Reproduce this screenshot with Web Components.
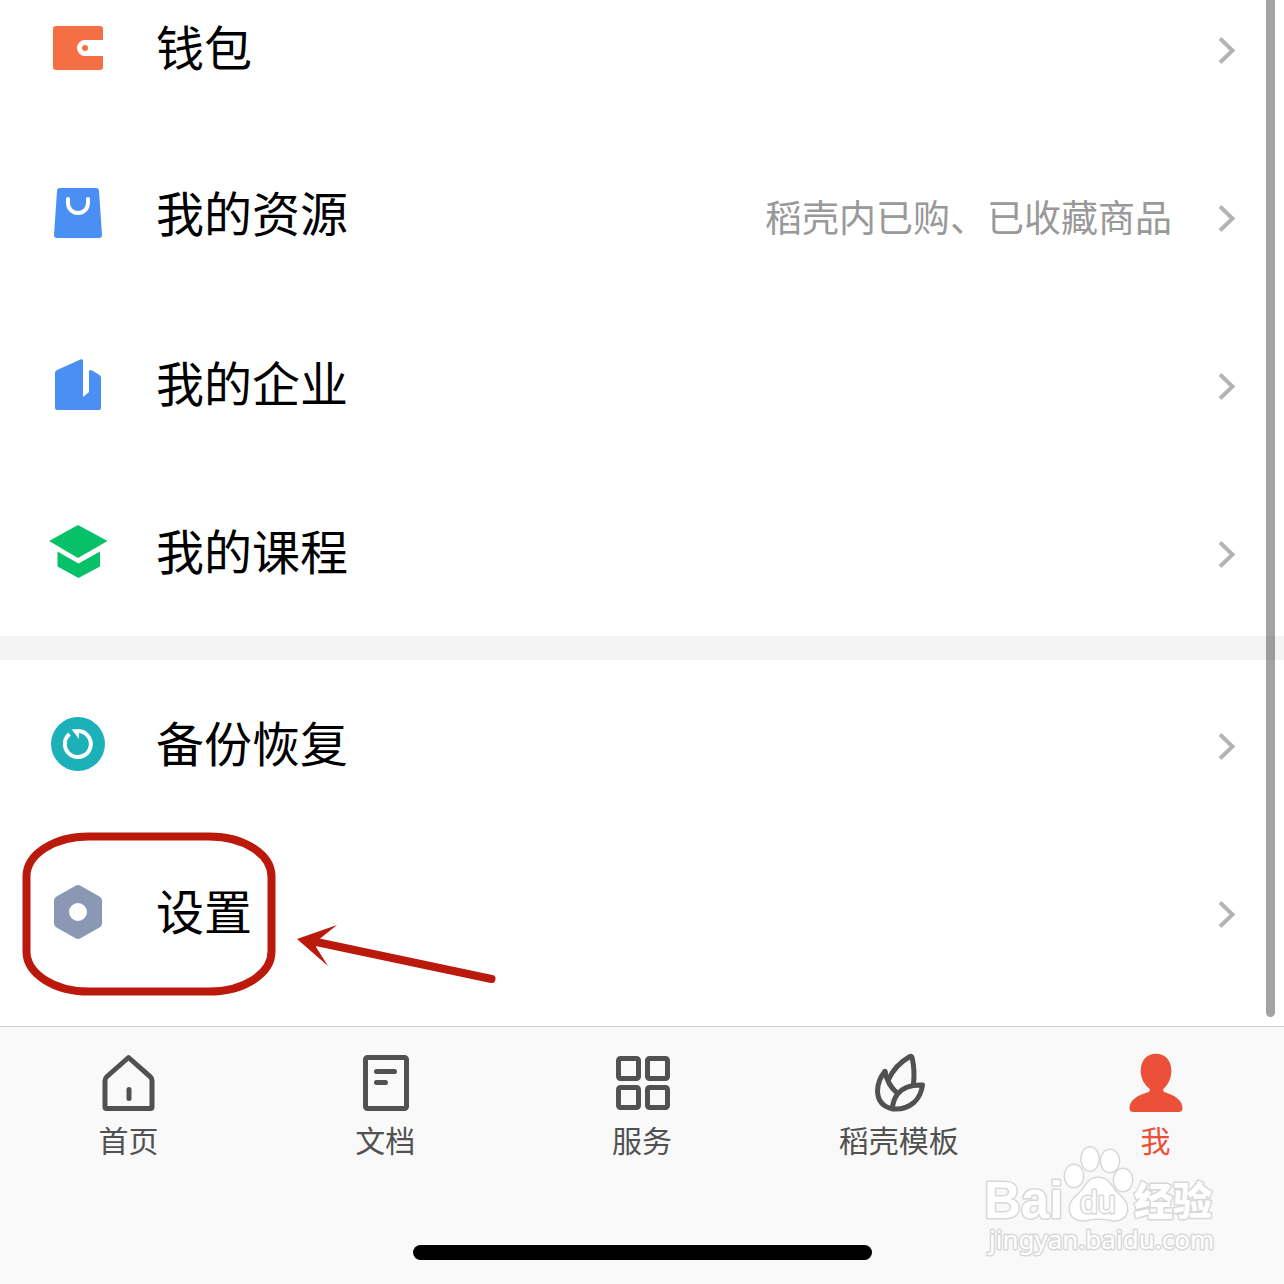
<!DOCTYPE html>
<html lang="zh-CN">
<head>
<meta charset="UTF-8">
<meta name="viewport" content="width=device-width, initial-scale=1.0">
<title>我</title>
<style>
    body{
    margin:0;
    font-family:"Noto Sans CJK SC","Noto Sans",sans-serif;
    background-color:white;
    }
</style>
</head>
<body>
<profile-page>
    <menu-row icon="wallet">钱包</menu-row>
    <menu-row icon="bag">我的资源<span slot="detail">稻壳内已购、已收藏商品</span></menu-row>
    <menu-row icon="company">我的企业</menu-row>
    <menu-row icon="course">我的课程</menu-row>
    <section-gap></section-gap>
    <menu-row icon="backup">备份恢复</menu-row>
    <menu-row icon="settings">设置<callout-mark slot="mark"></callout-mark></menu-row>
    <tab-bar slot="footer">
        <tab-item icon="home">首页</tab-item>
        <tab-item icon="doc">文档</tab-item>
        <tab-item icon="apps">服务</tab-item>
        <tab-item icon="leaf">稻壳模板</tab-item>
        <tab-item icon="me" active>我</tab-item>
    </tab-bar>
    <water-mark slot="footer"></water-mark>
</profile-page>

<script>
    const icons={
        wallet:`<path fill="#f56f45" d="M8 8h44q3 0 3 3v11H37a8 8 0 0 0 0 16h18v11q0 3-3 3H8q-3 0-3-3V11q0-3 3-3z"/>
            <circle cx="37" cy="30" r="3" fill="#f56f45"/>`,
        bag:`<path fill="#4a90f4" d="M12 2h36q3 0 3 3l3 44q0 3-3 3H9q-3 0-3-3l3-44q0-3 3-3z"/>
            <path fill="none" stroke="white" stroke-width="4" stroke-linecap="round" d="M20 13v4a10 10 0 0 0 20 0v-4"/>`,
        company:`<path fill="#4a90f4" d="M7 19q0-2 2-3L33 5.300q2-.5 2 1.500V43l6-5V18q0-3 3-1.500l7.500 4.500q1.500 1 1.500 3v30q0 2-2 2H9q-2 0-2-2z"/>`,
        course:`<path fill="#06c167" d="M1 19 30 3l29.500 16L30 36z M9.500 29.500l21 12 21.500-12v15L30.500 56l-21-11.500z"/>`,
        backup:`<circle cx="30" cy="30" r="27" fill="#1cb0b8"/>
            <path fill="none" stroke="white" stroke-width="4" d="M21.500 20a13 13 0 1 0 8.500-3"/>
            <path fill="white" d="M23.500 15.300H31V25z"/>`,
        settings:`<path fill="#8b98b5" fill-rule="evenodd" d="M27.500 3.700q2.500-1.400 5 0l19 10.800q2.500 1.500 2.500 4v23q0 2.500-2.500 4l-19 10.800q-2.500 1.400-5 0l-19-10.800Q6 44 6 41.500v-23q0-2.500 2.500-4zM30 21a9 9 0 1 0 0 18 9 9 0 0 0 0-18z"/>`,
        home:`<path d="M30.500 4.500 9 23.500q-2 1.700-2 4V54q0 1.500 1.500 1.500h44q1.500 0 1.500-1.500V27.500q0-2.300-2-4z"/><path d="M31 36.500v9"/>`,
        doc:`<rect x="10.500" y="4.500" width="41" height="51" rx="2"/><path d="M21.500 18.500h18M21.500 29.500h9"/>`,
        apps:`<rect x="6.500" y="5.500" width="20" height="20" rx="2"/><rect x="35.500" y="5.500" width="20" height="20" rx="2"/>
            <rect x="6.500" y="34.500" width="20" height="20" rx="2"/><rect x="35.500" y="34.500" width="20" height="20" rx="2"/>`,
        leaf:`<path d="M19.500 26.500Q26 12 41 3.500q1.800-.7 2.200 1.500Q46 18 44.500 31"/>
            <path d="M23.500 56Q23.500 48 28.500 41 36 31.500 53.500 32 52 43 45 49.500 36 57 24 56 9 53 8.500 38 9 26 16 18.500"/>
            <path d="M16 18.500Q18 31 28.500 40.500"/>`,
        me:`<path fill="currentColor" stroke="none" d="M30 .7c9 0 15.400 6.500 15.400 17 0 7-3 13.500-7.400 17.500-1.500 1.500-1 3 .8 4C48 42 56.500 47 56.500 55q0 4-4 4h-45q-4 0-4-4C3.500 47 12 42 22 39.200c2-1 2.500-2.500 1-4-5-4-8.300-10.500-8.300-17.500C14.700 7.200 21 .7 30 .7z"/>`
    };

    class ProfilePage extends HTMLElement{
        constructor(){
            super();
            this.attachShadow({mode:'open'});
            this.shadowRoot.innerHTML=`
            <style>
            :host{
            display:flex;
            flex-direction:column;
            height:100vh;
            position:relative;
            overflow:hidden;
            }
            main{
            flex:1;
            min-height:0;
            display:flex;
            flex-direction:column;
            justify-content:flex-end;
            padding-bottom:30px;
            box-sizing:border-box;
            position:relative;
            }
            .scroll{
            position:absolute;
            top:-8px;
            bottom:9px;
            right:9px;
            width:9px;
            border-radius:5px;
            background-color:rgba(0,0,0,0.36);
            }
            </style>
            <main><slot></slot><div class="scroll"></div></main>
            <slot name="footer"></slot>
            `;
        }
    }

    class MenuRow extends HTMLElement{
        constructor(){
            super();
            this.attachShadow({mode:'open'});
        }
        connectedCallback(){
            this.shadowRoot.innerHTML=`
            <style>
            :host{
            display:block;
            position:relative;
            flex:none;
            }
            a{
            display:flex;
            align-items:center;
            height:168px;
            padding:0 48px;
            color:black;
            text-decoration:none;
            }
            .icon{
            width:60px;
            height:60px;
            margin-right:48px;
            }
            .text{
            flex:1;
            display:flex;
            align-items:baseline;
            justify-content:space-between;
            line-height:60px;
            padding-bottom:6px;
            }
            .label{
            font-size:48px;
            }
            .detail{
            font-size:37px;
            color:#999;
            }
            .arrow{
            width:24px;
            height:60px;
            margin-left:40px;
            }
            </style>
            <a href="#${this.getAttribute('icon')}">
                <svg class="icon" viewBox="0 0 60 60" aria-hidden="true">${icons[this.getAttribute('icon')]}</svg>
                <span class="text">
                    <span class="label"><slot></slot></span>
                    <span class="detail"><slot name="detail"></slot></span>
                </span>
                <svg class="arrow" viewBox="0 0 24 60" aria-hidden="true"><path fill="none" stroke="#b4b4b4" stroke-width="4" d="M8 20.500 20.500 32.500 8 44.500"/></svg>
            </a>
            <slot name="mark"></slot>
            `;
        }
    }

    class SectionGap extends HTMLElement{
        constructor(){
            super();
            this.attachShadow({mode:'open'});
            this.shadowRoot.innerHTML=`
            <style>
            :host{
            display:block;
            flex:none;
            height:24px;
            background-color:#f4f4f4;
            }
            </style>
            `;
        }
    }

    // red frame and arrow over a row
    class CalloutMark extends HTMLElement{
        constructor(){
            super();
            this.attachShadow({mode:'open'});
            this.shadowRoot.innerHTML=`
            <style>
            :host{
            position:absolute;
            top:0;
            left:0;
            pointer-events:none;
            }
            svg{
            display:block;
            }
            </style>
            <svg width="504" height="168" viewBox="0 0 504 168" aria-hidden="true">
                <rect x="26.500" y="8.500" width="245" height="155" rx="62" ry="40" fill="none" stroke="#bb190b" stroke-width="8"/>
                <path d="M314 113.500 491.500 151" stroke="#bb190b" stroke-width="8" stroke-linecap="round"/>
                <path d="M297 111 337 97 317 113 316 119 328 138z" fill="#bb190b"/>
            </svg>
            `;
        }
    }

    class TabBar extends HTMLElement{
        constructor(){
            super();
            this.attachShadow({mode:'open'});
            this.shadowRoot.innerHTML=`
            <style>
            :host{
            display:flex;
            flex-direction:column;
            justify-content:space-between;
            align-items:center;
            flex:none;
            height:258px;
            box-sizing:border-box;
            padding:26px 0 24px;
            border-top:1px solid #cfcfcf;
            background-color:#f9f9f9;
            }
            nav{
            display:flex;
            width:100%;
            }
            .indicator{
            width:36%;
            max-width:459px;
            height:15px;
            border-radius:8px;
            background-color:black;
            }
            </style>
            <nav><slot></slot></nav>
            <div class="indicator"></div>
            `;
        }
    }

    class TabItem extends HTMLElement{
        constructor(){
            super();
            this.attachShadow({mode:'open'});
        }
        connectedCallback(){
            this.shadowRoot.innerHTML=`
            <style>
            :host{
            display:block;
            flex:1;
            color:#515151;
            }
            :host([active]){
            color:#eb5038;
            }
            a{
            display:flex;
            flex-direction:column;
            align-items:center;
            gap:8px;
            color:inherit;
            text-decoration:none;
            font-size:30px;
            line-height:36px;
            }
            svg{
            width:60px;
            height:60px;
            fill:none;
            stroke:currentColor;
            stroke-width:5;
            stroke-linecap:round;
            stroke-linejoin:round;
            }
            </style>
            <a href="#${this.getAttribute('icon')}">
                <svg viewBox="0 0 60 60" aria-hidden="true">${icons[this.getAttribute('icon')]}</svg>
                <span><slot></slot></span>
            </a>
            `;
        }
    }

    class WaterMark extends HTMLElement{
        constructor(){
            super();
            this.attachShadow({mode:'open'});
            this.shadowRoot.innerHTML=`
            <style>
            :host{
            position:absolute;
            right:64px;
            bottom:24px;
            pointer-events:none;
            }
            svg{
            display:block;
            fill:white;
            stroke:#d8d8d8;
            stroke-width:3;
            paint-order:stroke;
            stroke-linejoin:round;
            }
            .latin{
            font:bold 51px "Liberation Sans",sans-serif;
            }
            .du{
            font:32px "Liberation Sans",sans-serif;
            }
            .cjk{
            font:900 39px "Noto Sans CJK SC",sans-serif;
            }
            .site{
            font:26px "Noto Sans",sans-serif;
            }
            </style>
            <svg width="240" height="120" viewBox="0 0 240 120">
                <ellipse cx="94" cy="36" rx="9" ry="11"/>
                <ellipse cx="110" cy="19" rx="8.500" ry="11.500"/>
                <ellipse cx="130" cy="21" rx="9" ry="11"/>
                <ellipse cx="143" cy="40" rx="9" ry="11"/>
                <path d="M118 38c10 0 13 8 18 14 5 5 11 9 11 17 0 9-8 12-15 11-9-2-18-2-26 0-9 1-16-3-16-11 0-9 7-13 12-18 5-7 7-13 16-13z"/>
                <text class="latin" x="4" y="78">Bai</text>
                <text class="du" x="100" y="73">du</text>
                <text class="cjk" x="154" y="75">经验</text>
                <text class="site" x="9" y="109">jingyan.baidu.com</text>
            </svg>
            `;
        }
    }

    customElements.define('profile-page',ProfilePage);
    customElements.define('menu-row',MenuRow);
    customElements.define('section-gap',SectionGap);
    customElements.define('callout-mark',CalloutMark);
    customElements.define('tab-bar',TabBar);
    customElements.define('tab-item',TabItem);
    customElements.define('water-mark',WaterMark);
</script>
</body>
</html>
